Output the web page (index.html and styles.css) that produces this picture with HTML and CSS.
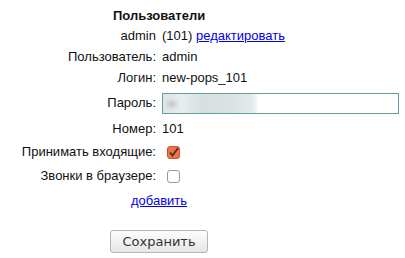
FILE: index.html
```html
<!DOCTYPE html>
<html>
<head>
    <meta charset="utf-8">
    <title>Пользователи</title>
    <link rel="stylesheet" href="styles.css">
</head>
<body>
    <div class="users">
        <div class="title">Пользователи</div>
        <div class="grid">
            <div class="lbl">admin</div>
            <div class="val">(101) <a href="#">редактировать</a></div>

            <div class="lbl">Пользователь:</div>
            <div class="val">admin</div>

            <div class="lbl">Логин:</div>
            <div class="val">new-pops_101</div>

            <div class="lbl row-pass">Пароль:</div>
            <div class="val row-pass"><input type="text" class="pass" value=""></div>

            <div class="lbl row-num">Номер:</div>
            <div class="val row-num">101</div>

            <div class="lbl row-chk first">Принимать входящие:</div>
            <div class="val row-chk first"><span class="chk on"><svg width="13" height="13" viewBox="0 0 13 13"><path d="M3 6.5 L5.5 9.5 L11 2" fill="none" stroke="#5a2a1a" stroke-width="1.8"/></svg></span></div>

            <div class="lbl row-chk">Звонки в браузере:</div>
            <div class="val row-chk"><span class="chk"></span></div>
        </div>
        <div class="add"><a href="#">добавить</a></div>
        <div class="actions"><button type="button">Сохранить</button></div>
    </div>
</body>
</html>
```
FILE: styles.css
```css
body {
    margin: 0;
    padding: 8px;
    font-family: 'Liberation Sans', Arial, sans-serif;
    font-size: 13px;
    color: #111;
    background: #fff;
}
a {
    color: #0000ee;
}
.users {
    width: 302px;
}
.title {
    font-weight: bold;
    padding-left: 105px;
    line-height: 16px;
}
.grid {
    display: grid;
    grid-template-columns: 148px auto;
    column-gap: 6px;
    margin-top: 1px;
}
.lbl {
    text-align: right;
    line-height: 21px;
    white-space: nowrap;
}
.val {
    line-height: 21px;
    white-space: nowrap;
}
.row-pass {
    height: 26px;
    line-height: 25px;
    padding-top: 2px;
}
.row-num {
    line-height: 23px;
    padding-top: 1px;
}
.row-chk {
    height: 25px;
    line-height: 24px;
}
.row-chk.first {
    height: 24px;
}
.row-chk.val {
    display: flex;
    align-items: center;
    padding-left: 5px;
}
.pass {
    width: 237px;
    height: 21px;
    box-sizing: border-box;
    border: 1px solid #5f9fa0;
    margin: 0;
    padding: 0;
    vertical-align: middle;
    background:
        radial-gradient(ellipse 8px 6px at 9px 10px, #c4c8c8, transparent),
        linear-gradient(90deg, #dfe4e4 0, #e8eded 20px, #d6dede 40px, #dde3e3 70px, #e6ecec 90px, transparent 96px) no-repeat;
    background-size: auto, 96px 100%;
}
.chk {
    display: inline-block;
    width: 13px;
    height: 13px;
    box-sizing: border-box;
    border: 1px solid #9a9a9a;
    border-radius: 3px;
    background: #fff;
}
.chk.on {
    background: #e9754a;
    border-color: #c5562e;
}
.chk svg {
    display: block;
    margin: -1px;
}
.add {
    text-align: center;
    line-height: 24px;
}
.actions {
    text-align: center;
    margin-top: 17px;
}
button {
    font-family: 'DejaVu Sans', sans-serif;
    font-size: 13px;
    color: #333;
    width: 98px;
    height: 23px;
    padding: 0;
    border: 1px solid #b5b5b5;
    border-radius: 3px;
    background: linear-gradient(#fdfdfd, #e6e6e6);
}
```
